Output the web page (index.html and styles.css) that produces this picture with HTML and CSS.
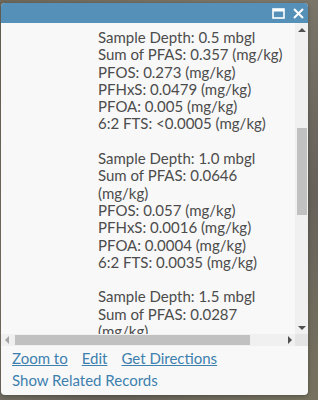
FILE: index.html
```html
<!DOCTYPE html>
<html lang="en">
<head>
    <meta charset="UTF-8">
    <title>Popup</title>
    <link rel="stylesheet" href="styles.css">
</head>
<body>
    <div class="map">
        <div class="popup">
            <div class="popup-header">
                <svg class="hdr-icon" width="13" height="11" viewBox="0 0 13 11">
                    <rect x="1" y="1" width="11" height="9" fill="none" stroke="#fff" stroke-width="1.6"/>
                    <rect x="1" y="1" width="11" height="2.5" fill="#fff"/>
                </svg>
                <svg class="hdr-icon" width="11" height="11" viewBox="0 0 11 11">
                    <path d="M1 1 L10 10 M10 1 L1 10" stroke="#fff" stroke-width="2"/>
                </svg>
            </div>
            <div class="viewport">
                <div class="content">
                    <div class="record">
                        Sample Depth: 0.5 mbgl<br>
                        Sum of PFAS: 0.357 (mg/kg)<br>
                        PFOS: 0.273 (mg/kg)<br>
                        PFHxS: 0.0479 (mg/kg)<br>
                        PFOA: 0.005 (mg/kg)<br>
                        6:2 FTS: &lt;0.0005 (mg/kg)<br>
                        <br>
                        Sample Depth: 1.0 mbgl<br>
                        Sum of PFAS: 0.0646 (mg/kg)<br>
                        PFOS: 0.057 (mg/kg)<br>
                        PFHxS: 0.0016 (mg/kg)<br>
                        PFOA: 0.0004 (mg/kg)<br>
                        6:2 FTS: 0.0035 (mg/kg)<br>
                        <br>
                        Sample Depth: 1.5 mbgl<br>
                        Sum of PFAS: 0.0287 (mg/kg)
                    </div>
                </div>
                <div class="vbar">
                    <span class="arrow up"></span>
                    <span class="vthumb"></span>
                    <span class="arrow down"></span>
                </div>
                <div class="hbar">
                    <span class="arrow left"></span>
                    <span class="hthumb"></span>
                    <span class="arrow right"></span>
                </div>
                <div class="corner"></div>
            </div>
            <div class="actions">
                <div class="action-row">
                    <a href="#">Zoom to</a>
                    <a href="#">Edit</a>
                    <a href="#">Get Directions</a>
                </div>
                <div class="action-row">
                    <a href="#" class="plain">Show Related Records</a>
                </div>
            </div>
        </div>
    </div>
</body>
</html>
```
FILE: styles.css
```css
body {
    margin: 0;
    font-family: Lato, "Open Sans", sans-serif;
}
.map {
    width: 318px;
    height: 400px;
    background: linear-gradient(135deg, #6c685c 0%, #7d786b 40%, #66625a 70%, #77725f 100%);
    padding: 3px 0 0 1px;
    box-sizing: border-box;
    overflow: hidden;
}
.popup {
    width: 307px;
    height: 392px;
    background-color: #f8f8f8;
    border-radius: 4px;
    overflow: hidden;
    box-shadow: 0 1px 4px rgba(0,0,0,0.3);
    display: flex;
    flex-direction: column;
}
.popup-header {
    height: 20px;
    flex: none;
    background-color: #5590b8;
    display: flex;
    justify-content: flex-end;
    align-items: center;
    gap: 8px;
    padding-right: 4px;
}
.hdr-icon {
    display: block;
}
.viewport {
    display: grid;
    grid-template-columns: 294px 13px;
    grid-template-rows: 311px 12px;
}
.content {
    overflow: hidden;
    padding: 6px 0 0 97px;
    color: #4c4c4c;
    font-size: 15px;
    line-height: 17.3px;
}
.record {
    width: 189px;
}
.vbar {
    background-color: #f0f0f0;
    display: flex;
    flex-direction: column;
    align-items: center;
}
.vthumb {
    display: block;
    width: 10px;
    height: 87px;
    margin: 96px 0 0 1px;
    background-color: #c1c1c1;
}
.hbar {
    background-color: #f0f0f0;
    display: flex;
    align-items: center;
}
.hthumb {
    display: block;
    height: 10px;
    width: 235px;
    margin-left: 6px;
    background-color: #c1c1c1;
}
.corner {
    background-color: #e4e4e4;
}
.arrow {
    display: block;
    width: 0;
    height: 0;
    border: 4px solid transparent;
}
.arrow.up {
    margin-top: 5px;
    border-top: 0;
    border-bottom-color: #505050;
}
.arrow.down {
    margin-top: auto;
    margin-bottom: 4px;
    border-bottom: 0;
    border-top-color: #505050;
}
.arrow.left {
    margin-left: 4px;
    border-left: 0;
    border-right-color: #a3a3a3;
}
.arrow.right {
    margin-left: auto;
    margin-right: 3px;
    border-right: 0;
    border-left-color: #505050;
}
.actions {
    padding: 1px 11px;
    font-size: 15px;
    line-height: 22px;
}
.action-row {
    display: flex;
    gap: 14px;
}
.actions a {
    color: #3d80ae;
}
.actions a.plain {
    text-decoration: none;
}
```
